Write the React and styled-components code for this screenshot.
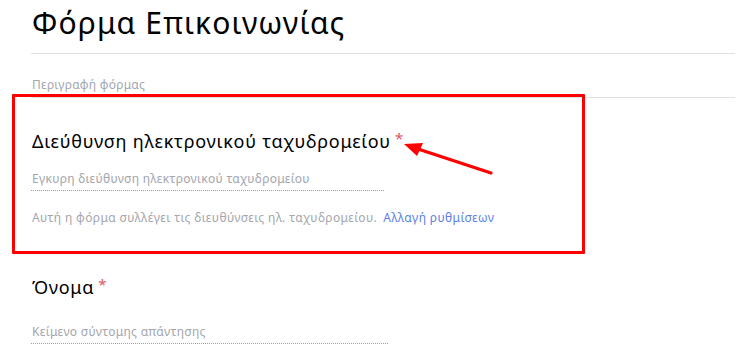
import React from "react";
import styled, { createGlobalStyle } from "styled-components";

const GlobalStyle = createGlobalStyle`
    html, body {
        margin: 0;
        padding: 0;
        background: #ffffff;
    }
    body {
        font-family: "Noto Sans", Roboto, "Liberation Sans", sans-serif;
        width: 750px;
        height: 356px;
        overflow: hidden;
    }
`;

const Page = styled.div`
    position: relative;
    width: 750px;
    height: 356px;
`;

const Form = styled.div`
    width: 704px;
    margin-left: 31px;
    display: flex;
    flex-direction: column;
`;

const Title = styled.h1`
    margin: 0;
    padding: 3px 0 10px 1px;
    font-size: 30px;
    line-height: 40px;
    font-weight: 400;
    letter-spacing: 1.15px;
    color: #000000;
    border-bottom: 1px solid #e0e0e0;
`;

const Description = styled.div`
    margin-top: 23px;
    padding: 0 0 4px 1px;
    font-size: 12px;
    line-height: 16px;
    letter-spacing: 0.25px;
    color: #a3a6ad;
    border-bottom: 1px solid #e0e0e0;
`;

const Question = styled.div`
    display: flex;
    flex-direction: column;
    align-items: flex-start;
    margin-top: ${(p) => p.$top}px;
`;

const QuestionTitle = styled.div`
    padding-left: 1px;
    font-size: 18px;
    line-height: 24px;
    letter-spacing: 0.75px;
    color: #000000;
`;

const Required = styled.span`
    position: relative;
    top: -4px;
    margin-left: 4px;
    font-size: 15px;
    letter-spacing: 0;
    color: #e2545f;
`;

const Answer = styled.div`
    width: ${(p) => p.$width}px;
    margin-top: ${(p) => p.$top}px;
    padding: 0 0 3px 1px;
    font-size: 12px;
    line-height: 16px;
    letter-spacing: 0.3px;
    color: #a3a6ad;
    border-bottom: 1px dotted #9e9e9e;
`;

const Note = styled.div`
    margin-top: 19px;
    padding-left: 1px;
    font-size: 12px;
    line-height: 16px;
    letter-spacing: 0.38px;
    color: #a3a6ad;
`;

const Link = styled.a`
    margin-left: 6px;
    color: #5b7fe8;
    text-decoration: none;
    cursor: pointer;
`;

const Highlight = styled.div`
    position: absolute;
    left: 12px;
    top: 94px;
    width: 573px;
    height: 160px;
    box-sizing: border-box;
    border: 3px solid #ff0000;
    border-radius: 1px;
    pointer-events: none;
`;

const Arrow = styled.svg`
    position: absolute;
    left: 395px;
    top: 130px;
    pointer-events: none;
`;

export default function App() {
    return (
        <Page>
            <GlobalStyle />
            <Form>
                <Title>Φόρμα Επικοινωνίας</Title>
                <Description>Περιγραφή φόρμας</Description>

                <Question $top={31}>
                    <QuestionTitle>
                        Διεύθυνση ηλεκτρονικού ταχυδρομείου<Required>*</Required>
                    </QuestionTitle>
                    <Answer $width={352} $top={17}>Εγκυρη διεύθυνση ηλεκτρονικού ταχυδρομείου</Answer>
                    <Note>
                        Αυτή η φόρμα συλλέγει τις διευθύνσεις ηλ. ταχυδρομείου.
                        <Link>Αλλαγή ρυθμίσεων</Link>
                    </Note>
                </Question>

                <Question $top={49}>
                    <QuestionTitle>
                        Όνομα<Required>*</Required>
                    </QuestionTitle>
                    <Answer $width={356} $top={24}>Κείμενο σύντομης απάντησης</Answer>
                </Question>
            </Form>

            <Highlight />
            <Arrow width="110" height="55" viewBox="0 0 110 55">
                <line x1="96" y1="43" x2="20" y2="18" stroke="#ff0000" strokeWidth="3.2" strokeLinecap="round" />
                <polygon points="9,14 28,13 22,26" fill="#ff0000" />
            </Arrow>
        </Page>
    );
}
